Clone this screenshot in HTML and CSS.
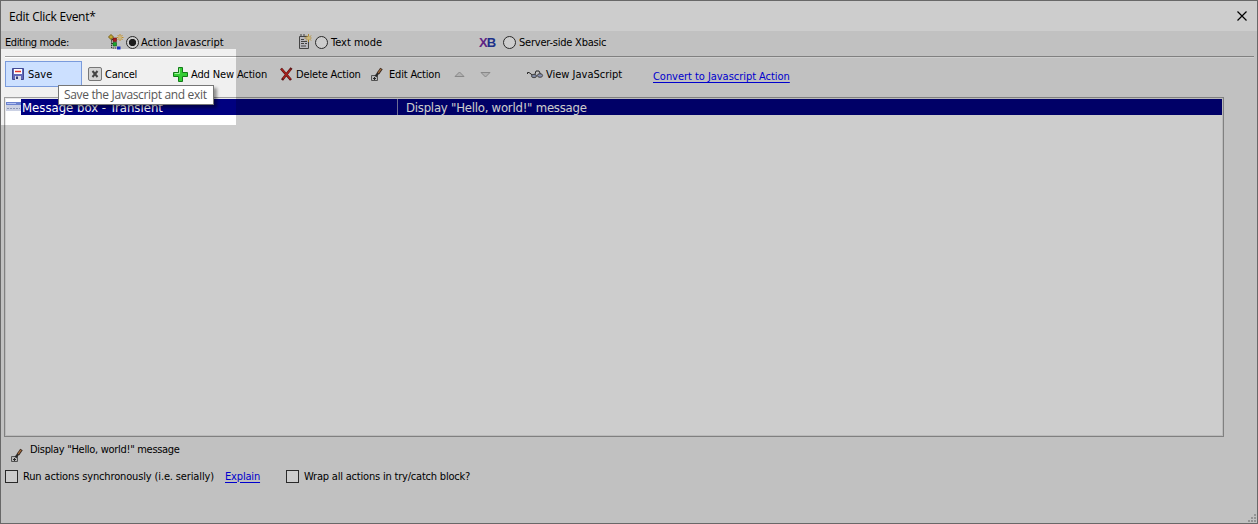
FILE: index.html
```html
<!DOCTYPE html>
<html lang="en">
<head>
<meta charset="utf-8">
<title>Edit Click Event</title>
<link rel="stylesheet" href="styles.css">
</head>
<body>
<svg width="0" height="0" class="defs">
  <symbol id="edit" viewBox="0 0 12 15">
    <path d="M.5 8.500h6v5h-6z" fill="#e4e4e4" stroke="#666"/><path d="M2 11.500h3M3.500 10v3" stroke="#333"/>
    <path d="M4.500 9.500L8 5" stroke="#333" stroke-width="2.200"/><path d="M7 6.500L10.500 1.500" stroke="#4a3528" stroke-width="3"/><path d="M7.200 6L10 2" stroke="#d08a4c" stroke-width="1.300"/>
  </symbol>
</svg>
<div class="dialog">
  <header class="title"><span>Edit Click Event*</span>
    <svg class="close" width="10" height="10"><path d="M.5.5l9 9M9.5.5l-9 9" stroke="#000" stroke-width="1.2"/></svg>
  </header>
  <div class="modes">
    <span class="mode-label">Editing mode:</span>
    <label class="mode tree">
      <svg width="16" height="16"><path d="M3.500 4v10h5M3.500 9.500h2M3.500 5.500h2" fill="none" stroke="#444" stroke-dasharray="1.500 .7"/><path d="M3 .5L5.500 3 3 5.500.5 3z" fill="#f3d23c" stroke="#8c6b10" stroke-width=".9"/><path d="M5 4h3.500v3.500H5z" fill="#d42222" stroke="#7c1616" stroke-width=".6"/><path d="M5 8.500h3.500V12H5z" fill="#22d03a" stroke="#146b1e" stroke-width=".6"/><path d="M9 12.500h3.500v3H9z" fill="#2338ee"/><path d="M12 0v7M8.500 3.500h7M9.600 1l5 5M14.500 1l-5 5" stroke="#f0a923" stroke-width=".9"/><circle cx="12" cy="3.500" r="1.800" fill="#ffe59c"/></svg>
      <i class="radio on"></i><span>Action Javascript</span>
    </label>
    <label class="mode text">
      <svg width="16" height="16"><path d="M1.500 2.500h9v12h-9z" fill="#e6e6ee" stroke="#555"/><path d="M3 2V0M6 2V0" stroke="#555"/><path d="M3 5.500h3M3 7.500h6M3 9.500h3M7 9.500h2M3 12h5" stroke="#555"/><path d="M10.500 0v8M6.500 4h7M8 1.500l5 5M13 1.500l-5 5" stroke="#dda728" stroke-width=".9"/><circle cx="10.500" cy="4" r="1.800" fill="#ffe898"/></svg>
      <i class="radio"></i><span>Text mode</span>
    </label>
    <label class="mode server">
      <b class="xb"><span>X</span>B</b>
      <i class="radio"></i><span class="xbasic">Server-side Xbasic</span>
    </label>
  </div>
  <div class="rule"></div>
  <div class="toolbar">
    <button class="tool save"><svg width="12" height="12"><path d="M.5.5h11v11h-11z" fill="#6268b8" stroke="#414892"/><path d="M2 1h8v5H2z" fill="#fff"/><path d="M3 3.500h6" stroke="#e13428" stroke-width="1.500"/><path d="M3 8h6v4H3z" fill="#d9dcea"/><path d="M4 8.500h2V11H4z" fill="#343d75"/></svg><span>Save</span></button>
    <button class="tool cancel"><svg width="14" height="14"><rect x=".5" y=".5" width="13" height="13" rx="1.500" fill="#d4d4d4" stroke="#777"/><path d="M4.500 4l5 6M9.500 4l-5 6" stroke="#444" stroke-width="2"/></svg><span>Cancel</span></button>
    <button class="tool add"><svg width="15" height="15"><path d="M5.500.5h4v5h5v4h-5v5h-4v-5h-5v-4h5z" fill="#35ce35" stroke="#127c18"/><path d="M6.500 1.500v5h-5" fill="none" stroke="#a0f49c"/></svg><span>Add New Action</span></button>
    <button class="tool del"><svg width="13" height="14"><path d="M1 1.500l10 11.500M11.500 1L2 13" stroke="#731818" stroke-width="2.600"/><path d="M1.500 2l9 10M10.500 2.500L3 11.500" stroke="#d32a24" stroke-width="1.300"/></svg><span>Delete Action</span></button>
    <button class="tool edit"><svg width="12" height="15"><use href="#edit"/></svg><span>Edit Action</span></button>
    <button class="tool up"><svg width="11" height="7"><path d="M1 5.500h9L5.500 1z" fill="#ddd" stroke="#aaa"/></svg></button>
    <button class="tool down"><svg width="11" height="7"><path d="M1 1.500h9L5.500 6z" fill="#ddd" stroke="#aaa"/></svg></button>
    <button class="tool view"><svg width="17" height="9"><path d="M.5 4V2.500h1.500l4 3M8 4l1-3h3l1.500 3" fill="none" stroke="#333"/><ellipse cx="7" cy="6" rx="2.500" ry="1.700" fill="#9eaccc" stroke="#555"/><ellipse cx="13" cy="5.500" rx="2.600" ry="1.800" fill="#a8b4dd" stroke="#555"/></svg><span>View JavaScript</span></button>
    <a class="convert">Convert to Javascript Action</a>
  </div>
  <div class="list">
    <div class="row">
      <svg class="row-icon" width="15" height="9"><path d="M0 0h15v9H0z" fill="#cbd1e4"/><path d="M0 0h15v3H0z" fill="#6b82cf"/><path d="M1 1.500h9" stroke="#b4c3f3"/><path d="M1 6.500h13" stroke="#8a95b8" stroke-dasharray="2 1"/></svg>
      <div class="cell name"><span>Message box - Transient</span></div>
      <div class="cell desc"><span>Display "Hello, world!" message</span></div>
    </div>
  </div>
  <div class="summary"><svg width="12" height="15"><use href="#edit"/></svg><span>Display "Hello, world!" message</span></div>
  <div class="options">
    <i class="check"></i><span class="opt sync">Run actions synchronously (i.e. serially)</span>
    <a class="explain">Explain</a>
    <i class="check"></i><span class="opt">Wrap all actions in try/catch block?</span>
  </div>
  <svg class="grip" width="8" height="8"><path d="M6 0h2v2H6zM3 3h2v2H3zM6 3h2v2H6zM0 6h2v2H0zM3 6h2v2H3zM6 6h2v2H6z" fill="#b8b8b8"/></svg>
  <div class="tooltip"><span>Save the Javascript and exit</span></div>
  <div class="spotlight"></div>
</div>
</body>
</html>
```
FILE: styles.css
```css
* { box-sizing: border-box; }
body { margin: 0; overflow: hidden; font: 11px "DejaVu Sans Condensed", "DejaVu Sans", sans-serif; font-stretch: condensed; color: #000; }
.defs { position: absolute; }
svg { flex: none; display: block; }
span, a { white-space: nowrap; }
.dialog { position: relative; width: 1258px; height: 524px; border: 1px solid #686868; background: #f0f0f0; overflow: hidden; }
.title { height: 30px; background: #fff; display: flex; align-items: center; justify-content: space-between; padding: 0 10px 0 8px; font: 12px "Open Sans", sans-serif; letter-spacing: -.25px; }
.modes { display: flex; height: 25px; align-items: center; padding: 0 0 3px 4px; }
.mode-label { width: 103px; letter-spacing: -.4px; }
.mode { display: flex; align-items: center; }
.tree { width: 190px; }
.text { width: 181px; }
.radio { width: 13px; height: 13px; border: 1px solid #333; border-radius: 50%; background: #fff; margin: 0 3px 0 1px; flex: none; }
.on { background: radial-gradient(circle, #222 0 3.3px, #fff 4px); margin: 0 2px; }
.xb { width: 17px; margin-right: 6px; font: bold 13px "Liberation Sans", sans-serif; letter-spacing: -1px; color: #263cab; }
.xb span { color: #782ca5; }
.xbasic { letter-spacing: -.22px; }
.rule { width: 1249px; height: 2px; margin-left: 4px; background: #a0a0a0; border-bottom: 1px solid #fff; }
.toolbar { height: 40px; padding: 3px 0 0 4px; display: flex; }
.tool { height: 26px; display: flex; align-items: center; border: 0; padding: 0; background: none; color: #000; font: inherit; text-align: left; flex: none; }
.tool svg { margin-right: 4px; }
.save { width: 77px; border: 1px solid #7a9bdc; background: #cce0ff; padding-left: 6px; }
.cancel { width: 85px; padding-left: 6px; letter-spacing: -.25px; }
.cancel svg { margin-right: 3px; }
.add { width: 106px; padding-left: 6px; letter-spacing: -.14px; }
.add svg { margin-right: 3px; }
.del { width: 98px; padding-left: 7px; letter-spacing: -.15px; }
.del svg { margin-right: 3px; }
.edit { width: 83px; letter-spacing: -.18px; }
.edit svg { margin-right: 6px; }
.up { width: 26px; }
.down { width: 47px; }
.view { width: 126px; }
.view svg { margin-right: 2px; }
.convert, .explain { color: #00f; text-decoration: underline; text-underline-offset: 2px; text-decoration-thickness: 1px; }
.convert { height: 18px; margin-top: 9px; letter-spacing: -.04px; }
.list { width: 1220px; height: 340px; margin: -1px 0 0 3px; border: 1px solid #a0a0a0; background: #fff; padding: 1px; box-shadow: inset 0 0 0 1px #e8e8e8; }
.row { height: 16px; display: flex; color: #fff; font-size: 13px; }
.row-icon { margin-top: 3px; }
.cell { background: #000080; line-height: 17px; height: 16px; }
.name { width: 377px; border-right: 1px solid #8888b8; padding-left: 1px; }
.desc { flex: 1; padding-left: 8px; letter-spacing: -.23px; }
.summary { display: flex; height: 28px; padding: 11px 0 0 10px; margin-bottom: 2px; letter-spacing: -.3px; }
.summary span { margin: -5px 0 0 7px; }
.options { display: flex; align-items: center; height: 18px; padding-left: 4px; letter-spacing: -.17px; }
.check { width: 13px; height: 13px; border: 1px solid #333; background: #fff; margin-right: 5px; flex: none; }
.opt { letter-spacing: -.2px; }
.sync { width: 202px; letter-spacing: -.14px; }
.explain { width: 61px; }
.grip { position: absolute; right: 1px; bottom: 1px; }
.tooltip { position: absolute; left: 57px; top: 84px; width: 156px; height: 20px; border: 1px solid #767676; background: #fff; box-shadow: 3px 3px 3px #0006; color: #575757; font: 12px/18px "Open Sans", sans-serif; letter-spacing: -.34px; padding-left: 5px; }
.spotlight { position: absolute; left: -1px; top: 48px; width: 236px; height: 76px; box-shadow: 0 0 0 1300px rgba(0,0,0,.195); pointer-events: none; }
```
